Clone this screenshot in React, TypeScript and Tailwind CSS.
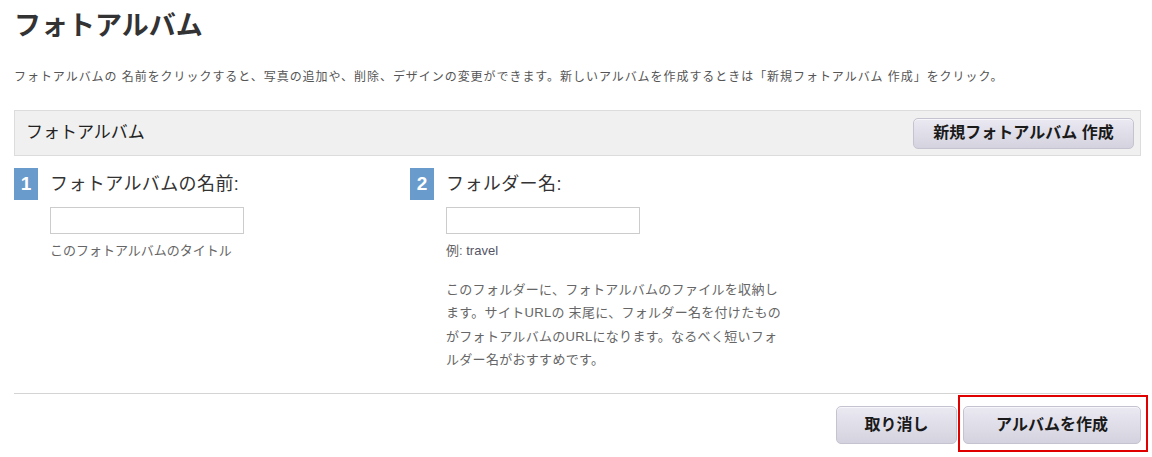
const font = { fontFamily: '"Liberation Sans", "Noto Sans CJK JP", sans-serif' };

function StepBadge({ n }: { n: number }) {
  return (
    <div className="flex h-[32px] w-[24px] shrink-0 items-center justify-center bg-[#6a9bcd] text-[19px] font-bold text-white">
      {n}
    </div>
  );
}

const btn =
  'rounded-[5px] border border-[#c4c3cf] bg-gradient-to-b from-[#ebeaf3] to-[#d3d2de] font-bold text-[#1a1a1a] shadow-[inset_0_1px_0_#f7f7fb]';

export default function App() {
  return (
    <div className="min-h-[457px] bg-white pl-[14px] pr-[11px] pt-[9px]" style={font}>
      <h1 className="text-[27px] font-bold leading-[34px] text-[#333]">フォトアルバム</h1>
      <p className="mt-[25px] text-[12px] leading-[18px] tracking-[0.95px] text-[#555]">
        フォトアルバムの 名前をクリックすると、写真の追加や、削除、デザインの変更ができます。新しいアルバムを作成するときは「新規フォトアルバム 作成」をクリック。
      </p>

      <div className="mt-[24px] flex h-[46px] items-center justify-between border border-[#dcdcdc] bg-[#f0f0f0] pl-[11px] pr-[6px]">
        <span className="text-[17px] text-[#222]">フォトアルバム</span>
        <button type="button" className={`${btn} h-[31px] w-[221px] text-[16px]`}>
          新規フォトアルバム 作成
        </button>
      </div>

      <div className="mt-[12px] grid grid-cols-[396px_1fr]">
        <div>
          <div className="flex items-center gap-[12px]">
            <StepBadge n={1} />
            <span className="text-[18px] tracking-[0.4px] text-[#333]">フォトアルバムの名前:</span>
          </div>
          <div className="pl-[36px]">
            <input type="text" className="mt-[7px] block h-[27px] w-[194px] border border-[#cccccc] bg-white" />
            <p className="mt-[8px] text-[13px] leading-[18px] text-[#666]">このフォトアルバムのタイトル</p>
          </div>
        </div>
        <div>
          <div className="flex items-center gap-[12px]">
            <StepBadge n={2} />
            <span className="text-[18px] tracking-[0.4px] text-[#333]">フォルダー名:</span>
          </div>
          <div className="pl-[36px]">
            <input type="text" className="mt-[7px] block h-[27px] w-[194px] border border-[#cccccc] bg-white" />
            <p className="mt-[8px] text-[13px] leading-[18px] text-[#666]">
              例: <span className="text-[#556]">travel</span>
            </p>
            <p className="mt-[18px] w-[345px] text-[13px] leading-[23.3px] tracking-[0.3px] text-[#666]">
              このフォルダーに、フォトアルバムのファイルを収納し
              <br />
              ます。サイトURLの 末尾に、フォルダー名を付けたもの
              <br />
              がフォトアルバムのURLになります。なるべく短いフォ
              <br />
              ルダー名がおすすめです。
            </p>
          </div>
        </div>
      </div>

      <div className="mt-[22px] border-t border-[#d4d4d4]" />

      <div className="mt-[12px] flex justify-end gap-[6px]">
        <button type="button" className={`${btn} h-[38px] w-[121px] text-[16px]`}>
          取り消し
        </button>
        <div className="relative">
          <button type="button" className={`${btn} h-[38px] w-[178px] text-[16px]`}>
            アルバムを作成
          </button>
          <div className="pointer-events-none absolute -bottom-[8px] -left-[5px] -right-[7px] -top-[11px] border-2 border-[#e00000]" />
        </div>
      </div>
    </div>
  );
}
